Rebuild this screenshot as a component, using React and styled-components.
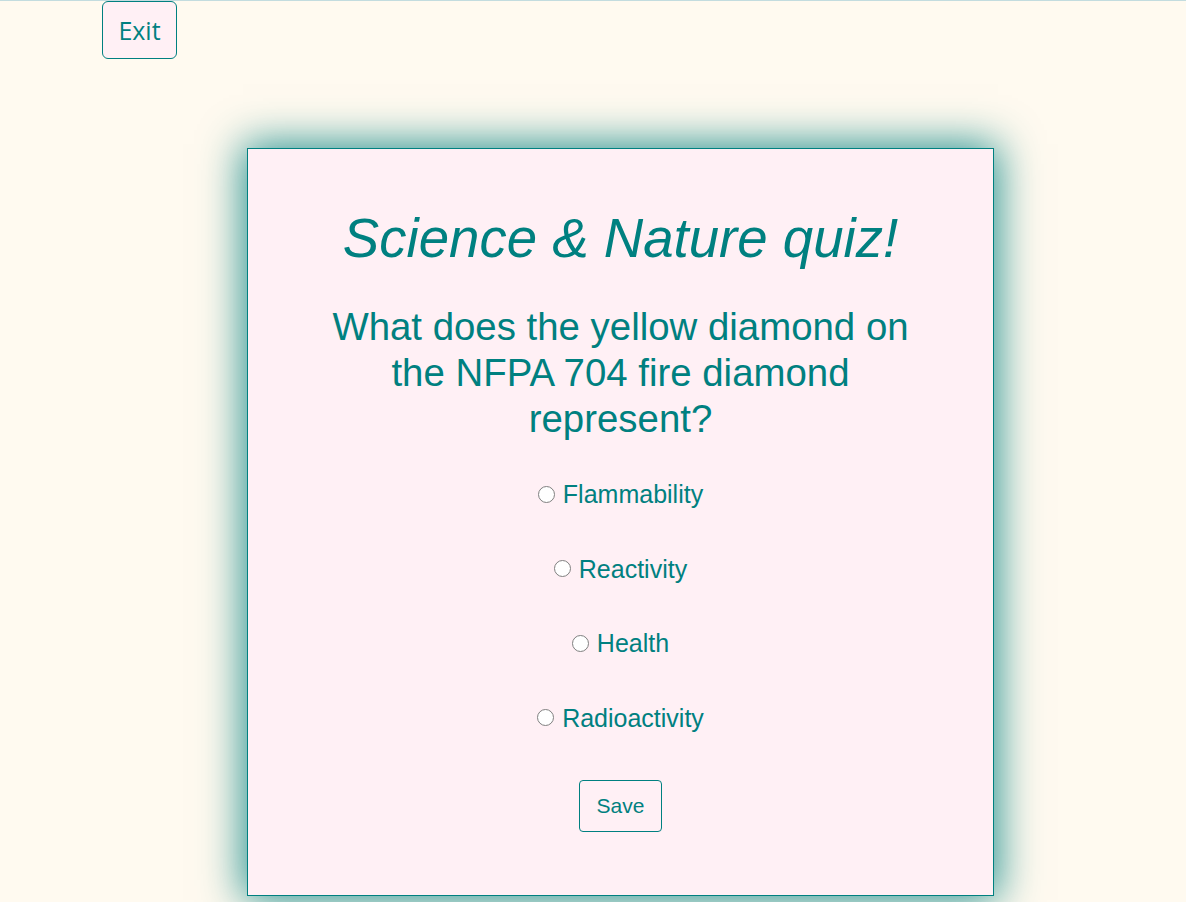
import React, { useState } from "react";
import styled, { createGlobalStyle } from "styled-components";

const GlobalStyle = createGlobalStyle`
	html, body {
		margin: 0;
		padding: 0;
	}
	body {
		background: #fffaf0;
		border-top: 1px solid #c3dcdf;
		font-family: "Liberation Sans", Arial, sans-serif;
		color: #008080;
	}
`;

const answers = ["Flammability", "Reactivity", "Health", "Radioactivity"];

const App = () => {
	const [picked, setPicked] = useState(null);

	return (
		<>
			<GlobalStyle />
			<StyPage>
				<StyTopBar>
					<StyExitBtn>Exit</StyExitBtn>
				</StyTopBar>
				<StyCard>
					<StyTitle>Science &amp; Nature quiz!</StyTitle>
					<StyQuestion>
						What does the yellow diamond on the NFPA 704 fire
						diamond represent?
					</StyQuestion>
					<StyOptions>
						{answers.map((answer) => (
							<StyOption key={answer}>
								<StyRadio
									type="radio"
									name="answer"
									checked={picked === answer}
									onChange={() => setPicked(answer)}
								/>
								{answer}
							</StyOption>
						))}
					</StyOptions>
					<StySaveBtn type="button">Save</StySaveBtn>
				</StyCard>
			</StyPage>
		</>
	);
};

const StyPage = styled.div`
	display: flex;
	flex-direction: column;
	min-height: 901px;
`;

const StyTopBar = styled.div`
	display: flex;
	padding-left: 102px;
`;

const StyExitBtn = styled.button`
	width: 75px;
	height: 58px;
	background: #fff0f5;
	border: 1px solid #008080;
	border-radius: 6px;
	color: #008080;
	font-family: "Open Sans", "Noto Sans", sans-serif;
	font-size: 25px;
	padding: 0;
	cursor: pointer;
`;

const StyCard = styled.div`
	display: flex;
	flex-direction: column;
	align-items: center;
	width: 745px;
	margin: 89px 0 0 247px;
	padding: 58px 0 63px;
	background: #fff0f5;
	border: 1px solid #008080;
	box-shadow: 0 0 40px 4px rgba(0, 128, 128, 0.85);
`;

const StyTitle = styled.h1`
	margin: 0;
	font-size: 54.6px;
	font-style: italic;
	font-weight: normal;
	line-height: 63px;
`;

const StyQuestion = styled.h2`
	margin: 34px 0 0;
	max-width: 600px;
	text-align: center;
	font-size: 38.4px;
	font-weight: normal;
	line-height: 46px;
`;

const StyOptions = styled.div`
	display: flex;
	flex-direction: column;
	align-items: center;
	gap: 46px;
	margin-top: 38px;
`;

const StyOption = styled.label`
	display: flex;
	align-items: center;
	gap: 8px;
	font-size: 25px;
	line-height: 28.5px;
	cursor: pointer;
`;

const StyRadio = styled.input`
	appearance: none;
	width: 17px;
	height: 17px;
	margin: 0;
	border: 1.5px solid #808080;
	border-radius: 50%;
	background: #fff;
	cursor: pointer;
	&:checked {
		background: radial-gradient(circle, #008080 0 4px, #fff 5px);
		border-color: #008080;
	}
`;

const StySaveBtn = styled.button`
	margin-top: 48px;
	padding: 12px 17px 13px;
	background: #fff0f5;
	border: 1px solid #008080;
	border-radius: 4px;
	color: #008080;
	font-family: "Liberation Sans", Arial, sans-serif;
	font-size: 21px;
	line-height: 25px;
	cursor: pointer;
`;

export default App;
